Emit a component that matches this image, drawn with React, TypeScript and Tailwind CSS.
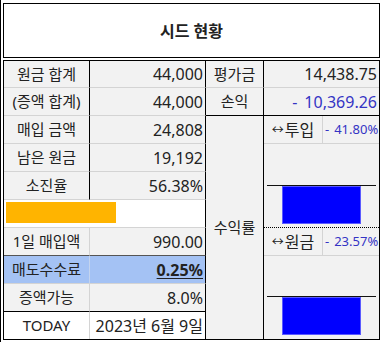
const KR = "font-['Noto_Sans','Noto_Sans_CJK_KR',sans-serif]"

const leftRows = [
  { label: '원금 합계', value: '44,000' },
  { label: '(증액 합계)', value: '44,000' },
  { label: '매입 금액', value: '24,808' },
  { label: '남은 원금', value: '19,192' },
  { label: '소진율', value: '56.38%' },
]

function MiniChart({ lineY }: { lineY: number }) {
  return (
    <svg width="115" height="83" viewBox="0 0 115 83" className="block">
      <rect x="18.5" y={lineY + 1.5} width="78" height="37" fill="#0000ff" stroke="#5a5aff" />
      <line x1="3" x2="112" y1={lineY + 0.5} y2={lineY + 0.5} stroke="#111" strokeWidth="1" />
    </svg>
  )
}

function SubRow({ label, value }: { label: string; value: string }) {
  return (
    <div className="flex h-full border-b border-[#d4d4d4]">
      <div className="flex w-[59px] items-center justify-center border-r border-[#d4d4d4] text-[16px]">
        <span className="mr-[1px] text-[12px]">↔</span>
        {label}
      </div>
      <div className="flex flex-1 items-center overflow-hidden whitespace-nowrap pl-[2px] text-[13px] text-[#3434c4]">
        <span className="mr-[5px]">-</span>
        {value}
      </div>
    </div>
  )
}

export default function App() {
  return (
    <div className={`relative flex h-[342px] w-[384px] overflow-hidden bg-white text-[#222] ${KR}`}>
      <div className="h-full w-px bg-black" />
      <div className="w-[2px]" />
      <div className="flex w-[377px] flex-col">
        <div className="h-[3px]" />
        <div className="flex h-[55px] items-center justify-center border border-black text-[16px] font-bold">
          시드 현황
        </div>
        <div className="h-[2px]" />
        <div className="grid h-[280px] grid-cols-[86px_116px_58px_115px] grid-rows-[27px_repeat(8,28px)_27px] border border-black bg-[#f2f2f2]">
          {leftRows.map((r, i) => (
            <div key={r.label} className="contents">
              <div
                className="flex items-center justify-center border-r border-b border-r-black border-b-[#d4d4d4] border-r-dotted text-[15px]"
                style={{ gridRow: i + 1, gridColumn: 1 }}
              >
                {r.label}
              </div>
              <div
                className="flex items-center justify-end border-r border-b border-r-black border-b-[#d4d4d4] pr-[2px] text-[16px]"
                style={{ gridRow: i + 1, gridColumn: 2 }}
              >
                {r.value}
              </div>
            </div>
          ))}

          <div className="col-span-2 col-start-1 row-start-6 flex items-start border-r border-b border-r-black border-b-[#d4d4d4] bg-white pt-[2px] pl-[2px]">
            <div className="h-[21px] w-[110px] bg-[#ffb400]" />
          </div>

          <div className="col-start-1 row-start-7 flex items-center justify-center border-r border-b border-r-[#d4d4d4] border-b-[#555] text-[15px]">
            1일 매입액
          </div>
          <div className="col-start-2 row-start-7 flex items-center justify-end border-r border-b border-r-black border-b-[#555] pr-[2px] text-[16px]">
            990.00
          </div>

          <div className="col-start-1 row-start-8 flex items-center justify-center border-r border-b border-r-[#c4d4ee] border-b-[#d4d4d4] bg-[#a4c2f4] text-[15px]">
            매도수수료
          </div>
          <div className="col-start-2 row-start-8 flex items-center justify-end border-r border-b border-r-black border-b-[#d4d4d4] bg-[#a4c2f4] pr-[2px] text-[16px] font-bold underline underline-offset-2">
            0.25%
          </div>

          <div className="col-start-1 row-start-9 flex items-center justify-center border-r border-b border-r-[#d4d4d4] border-b-black text-[15px]">
            증액가능
          </div>
          <div className="col-start-2 row-start-9 flex items-center justify-end border-r border-b border-r-black border-b-black pr-[2px] text-[16px]">
            8.0%
          </div>

          <div className="col-start-1 row-start-10 flex items-center justify-center border-r border-r-[#d4d4d4] bg-white text-[15px]">
            TODAY
          </div>
          <div className="col-start-2 row-start-10 flex items-center justify-end border-r border-r-black bg-white pr-[2px] text-[16px]">
            2023년 6월 9일
          </div>

          <div className="col-start-3 row-start-1 flex items-center justify-center border-r border-b border-r-black border-r-dotted border-b-[#d4d4d4] text-[15px]">
            평가금
          </div>
          <div className="col-start-4 row-start-1 flex items-center justify-end border-b border-b-[#d4d4d4] pr-[2px] text-[16px]">
            14,438.75
          </div>
          <div className="col-start-3 row-start-2 flex items-center justify-center border-r border-b border-r-black border-r-dotted border-b-black text-[15px]">
            손익
          </div>
          <div className="col-start-4 row-start-2 flex items-center justify-end border-b border-b-black pr-[2px] text-[16px] text-[#3434c4]">
            <span className="mr-[7px]">-</span>
            10,369.26
          </div>

          <div className="col-start-3 row-span-8 row-start-3 flex items-center justify-center border-r border-r-black border-r-dotted text-[15px]">
            수익률
          </div>

          <div className="col-start-4 row-start-3">
            <SubRow label="투입" value="41.80%" />
          </div>
          <div className="col-start-4 row-span-3 row-start-4 border-b border-dotted border-b-black">
            <MiniChart lineY={41} />
          </div>
          <div className="col-start-4 row-start-7">
            <SubRow label="원금" value="23.57%" />
          </div>
          <div className="col-start-4 row-span-3 row-start-8">
            <MiniChart lineY={40} />
          </div>
        </div>
      </div>
    </div>
  )
}
